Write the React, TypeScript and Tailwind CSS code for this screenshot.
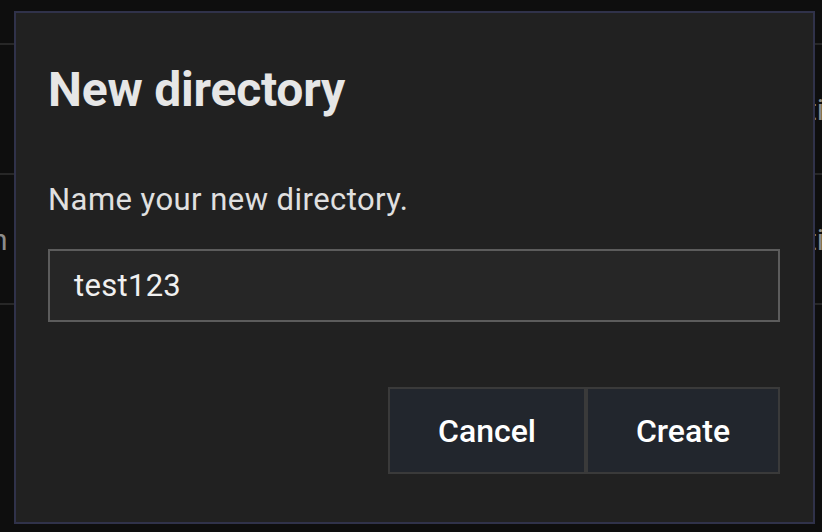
import React from "react";

export default function App() {
  const font = { fontFamily: "Roboto, 'Noto Sans', sans-serif" } as React.CSSProperties;
  return (
    <div className="relative w-[822px] h-[532px] overflow-hidden bg-[#0e0e0e]" style={font}>
      {/* background table */}
      <div className="flex flex-col">
        <div className="h-[45px] border-b-2 border-[#272727]" />
        <div className="h-[130px] border-b-2 border-[#272727] flex items-center justify-end text-[30px] text-[#8c8c8c]">
          <span className="-mr-[2px]">ti</span>
        </div>
        <div className="h-[130px] border-b-2 border-[#272727] flex items-center justify-between text-[30px] text-[#8c8c8c]">
          <span className="-ml-[9px]">n</span>
          <span className="-mr-[2px]">ti</span>
        </div>
      </div>

      {/* dialog */}
      <div className="absolute left-[14px] top-[11px] w-[801px] h-[513px] border-2 border-[#30324a] bg-[#212121] flex flex-col pl-[32px] pr-[33px]">
        <h1 className="mt-[53px] text-[48px] leading-none font-bold text-[#e6e6e6] tracking-[-0.2px]">New directory</h1>
        <p className="mt-[70px] text-[31px] leading-none text-[#e0e0e0] tracking-[0.45px]">Name your new directory.</p>
        <div className="mt-[34px] h-[73px] border-2 border-[#5c5c5c] bg-[#262626] flex items-center pl-[24px]">
          <span className="mt-[1px] text-[31px] text-[#f0f0f0] tracking-[0.3px]">test123</span>
        </div>
        <div className="mt-[65px] flex justify-end">
          <button className="w-[198px] h-[87px] border-2 border-[#3a3a3a] bg-[#22262d] text-[32px] font-medium text-white">
            Cancel
          </button>
          <button className="w-[194px] h-[87px] border-2 border-[#3a3a3a] bg-[#22262d] text-[32px] font-medium text-white">
            Create
          </button>
        </div>
      </div>
    </div>
  );
}
